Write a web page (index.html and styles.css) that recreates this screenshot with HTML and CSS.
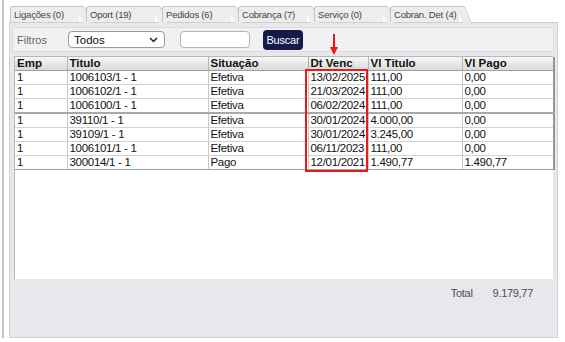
FILE: index.html
```html
<!doctype html>
<html>
<head>
  <meta charset="utf-8">
  <title>Cobrança</title>
  <link rel="stylesheet" href="styles.css">
</head>
<body>
  <div class="shell">
    <div class="tabs">
      <div class="tab">Ligações (0)</div>
      <div class="tab">Oport (19)</div>
      <div class="tab">Pedidos (6)</div>
      <div class="tab active">Cobrança (7)</div>
      <div class="tab">Serviço (0)</div>
      <div class="tab">Cobran. Det (4)</div>
    </div>

    <div class="panel">
      <div class="filters">
        <span class="label">Filtros</span>
        <div class="select">Todos
          <svg width="9" height="6" viewBox="0 0 9 6"><path d="M1 1l3.5 3.5L8 1" fill="none" stroke="#222" stroke-width="1.5"/></svg>
        </div>
        <div class="search"></div>
        <button class="btn">Buscar</button>
      </div>

      <div class="grid-wrap">
        <table class="grid">
          <colgroup>
            <col class="c-emp"><col class="c-tit"><col class="c-sit"><col class="c-dt"><col class="c-vl"><col class="c-pg">
          </colgroup>
          <thead>
            <tr>
              <th>Emp</th>
              <th>Titulo</th>
              <th>Situação</th>
              <th>Dt Venc</th>
              <th>Vl Titulo</th>
              <th>Vl Pago</th>
            </tr>
          </thead>
          <tbody>
            <tr><td>1</td><td>1006103/1 - 1</td><td>Efetiva</td><td>13/02/2025</td><td>111,00</td><td>0,00</td></tr>
            <tr><td>1</td><td>1006102/1 - 1</td><td>Efetiva</td><td>21/03/2024</td><td>111,00</td><td>0,00</td></tr>
            <tr class="split"><td>1</td><td>1006100/1 - 1</td><td>Efetiva</td><td>06/02/2024</td><td>111,00</td><td>0,00</td></tr>
            <tr><td>1</td><td>39110/1 - 1</td><td>Efetiva</td><td>30/01/2024</td><td>4.000,00</td><td>0,00</td></tr>
            <tr><td>1</td><td>39109/1 - 1</td><td>Efetiva</td><td>30/01/2024</td><td>3.245,00</td><td>0,00</td></tr>
            <tr><td>1</td><td>1006101/1 - 1</td><td>Efetiva</td><td>06/11/2023</td><td>111,00</td><td>0,00</td></tr>
            <tr class="last"><td>1</td><td>300014/1 - 1</td><td>Pago</td><td>12/01/2021</td><td>1.490,77</td><td>1.490,77</td></tr>
          </tbody>
        </table>

        <!-- highlight marks over the grid -->
        <div class="mark-box"></div>
        <svg class="mark-arrow" width="10" height="22" viewBox="0 0 10 22">
          <line x1="5" y1="0" x2="5" y2="15" stroke="#e8191c" stroke-width="2"/>
          <path d="M1 13h8l-4 8z" fill="#e8191c"/>
        </svg>
      </div>

      <div class="totals">
        <span>Total</span>
        <span class="sum">9.179,77</span>
      </div>
    </div>
  </div>
</body>
</html>
```

FILE: styles.css
```css
* {
  box-sizing: border-box;
}
body {
  margin: 0;
  width: 565px;
  height: 342px;
  background: #fff;
  font-family: "Liberation Sans", Arial, sans-serif;
  padding: 0 7px 4px 2px;
  overflow: hidden;
}
.shell {
  height: 100%;
  border-left: 2px solid #c4c4c4;
  padding: 6px 0 0 5px;
  display: flex;
  flex-direction: column;
}

/* tabs */
.tabs {
  display: flex;
  height: 16px;
  padding-left: 1px;
}
.tab {
  position: relative;
  width: 69px;
  margin-right: 7px;
  padding: 2px 0 0 3px;
  font-size: 9.5px;
  letter-spacing: -0.2px;
  color: #444;
  background: #ededed;
  border: 1px solid #cbc3c3;
  border-right: none;
  border-bottom: none;
  border-radius: 3px 0 0 0;
  white-space: nowrap;
}
.tab::after {
  content: '';
  position: absolute;
  top: -1px;
  right: -6px;
  width: 8px;
  height: 16px;
  background: #ededed;
  border-top: 1px solid #cbc3c3;
  border-right: 1px solid #cbc3c3;
  border-radius: 0 3px 0 0;
  transform: skewX(22deg);
  transform-origin: top left;
}

/* main panel */
.panel {
  flex: 1;
  background: #e8e8ec;
  border: 1px solid #d8d0d0;
  border-top-color: #d4cccc;
  padding: 4px 3px 0 2px;
  display: flex;
  flex-direction: column;
}
.filters {
  height: 25px;
  background: #f1f1f4;
  border: 1px solid #dcdce0;
  display: flex;
  align-items: center;
  padding-left: 4px;
}
.label {
  font-size: 11px;
  color: #666;
  width: 51px;
}
.select {
  width: 97px;
  height: 17px;
  background: #fff;
  border: 1px solid #9a9a9a;
  border-radius: 4px;
  font-size: 11.5px;
  color: #111;
  padding: 1px 0 0 5px;
  display: flex;
  justify-content: space-between;
  align-items: center;
}
.select svg {
  margin-right: 6px;
}
.search {
  width: 70px;
  height: 17px;
  margin-left: 15px;
  background: #fff;
  border: 1px solid #b4b4b4;
  border-radius: 4px;
}
.btn {
  margin-left: 13px;
  width: 40px;
  height: 20px;
  padding: 0;
  font-family: inherit;
  font-size: 11px;
  letter-spacing: -0.2px;
  color: #fff;
  background: #141a4a;
  border: none;
  border-radius: 4px;
}

/* grid */
.grid-wrap {
  position: relative;
  height: 223px;
  margin: 4px 1px 0 2px;
  background: #fff;
  border-left: 1px solid #b8b8b8;
  border-top: 1px solid #b8b8b8;
}
.grid {
  width: 539px;
  table-layout: fixed;
  border-collapse: collapse;
  font-size: 11.5px;
  letter-spacing: -0.3px;
  color: #111;
}
.grid th {
  height: 13px;
  padding: 0 2px;
  text-align: left;
  font-weight: bold;
  letter-spacing: 0;
  background: linear-gradient(#f7f7f7, #d9d9d9);
  border-right: 1px solid #b4b4b4;
  border-bottom: 1px solid #9aa0a8;
  line-height: 12px;
}
.grid td {
  height: 14px;
  padding: 0 2px;
  line-height: 13px;
  border-right: 1px solid #c8c8c8;
  border-bottom: 1px solid #d2d2d2;
  white-space: nowrap;
}
.grid th:last-child,
.grid td:last-child {
  border-right: 2px solid #8c98a4;
}
.grid tr.split td {
  border-bottom: 2px solid #a8a8a8;
}
.grid tr.last td {
  border-bottom: 1px solid #9aa0a8;
}
.c-emp { width: 52px; }
.c-tit { width: 141px; }
.c-sit { width: 100px; }
.c-dt { width: 60px; }
.c-vl { width: 94px; }
.c-pg { width: 92px; }

.mark-box {
  position: absolute;
  left: 290px;
  top: 12px;
  width: 63px;
  height: 103px;
  border: 2px solid #e8191c;
}
.mark-arrow {
  position: absolute;
  left: 314px;
  top: -23px;
}

/* footer total */
.totals {
  display: flex;
  justify-content: flex-end;
  gap: 20px;
  padding: 8px 21px 0 0;
  font-size: 11px;
  letter-spacing: -0.3px;
  color: #4a4e5a;
}
```
